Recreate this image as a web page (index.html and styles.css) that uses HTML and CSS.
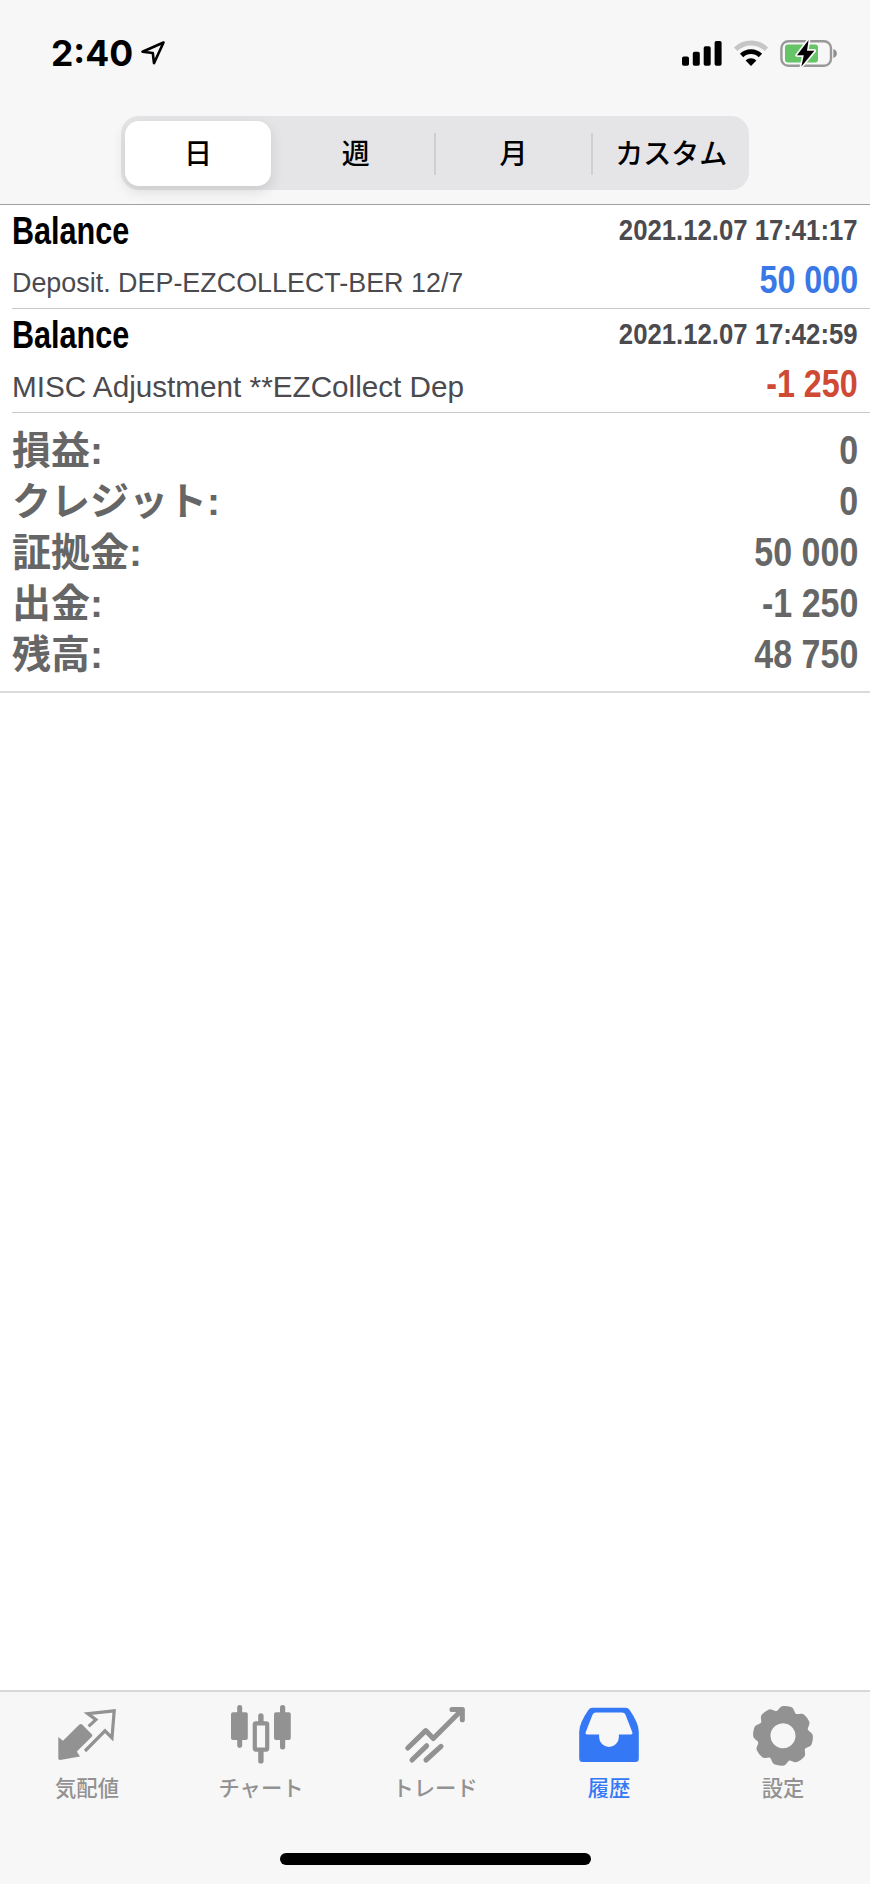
FILE: index.html
```html
<!DOCTYPE html>
<html lang="ja">
<head>
    <meta charset="UTF-8">
    <meta name="viewport" content="width=device-width, initial-scale=1.0">
    <title>履歴</title>
    <link rel="stylesheet" href="styles.css">
</head>
<body>
    <header class="header">
        <div class="status-bar">
            <span class="clock">2:40</span>
            <svg class="location" width="26" height="26" viewBox="0 0 26 26">
                <path d="M23.5 2.5 L2.5 11.8 L12.8 13 L14 23.2 Z" fill="none" stroke="#000" stroke-width="2.6" stroke-linejoin="round"/>
            </svg>
            <div class="status-icons">
                <svg width="40" height="26" viewBox="0 0 40 26">
                    <rect x="0" y="16.5" width="7" height="9.2" rx="1.8"/>
                    <rect x="10.8" y="11.8" width="7" height="13.9" rx="1.8"/>
                    <rect x="21.7" y="6.2" width="7" height="19.5" rx="1.8"/>
                    <rect x="32.6" y="1" width="7" height="24.7" rx="1.8"/>
                </svg>
                <svg width="36" height="26" viewBox="0 0 36 26">
                    <path d="M2.6 9.2 A22 22 0 0 1 33.4 9.2" fill="none" stroke="#c6c6c6" stroke-width="5"/>
                    <path d="M8.6 15.5 A13.4 13.4 0 0 1 27.4 15.5" fill="none" stroke="#000" stroke-width="4.8"/>
                    <path d="M18 26 L12.6 20.4 A7.6 7.6 0 0 1 23.4 20.4 Z"/>
                </svg>
                <svg width="58" height="30" viewBox="0 0 58 30">
                    <rect x="1.4" y="3.2" width="49.6" height="24.6" rx="7" fill="none" stroke="#999" stroke-width="2.4"/>
                    <path d="M53.4 11 Q56.8 12.4 56.8 15.4 Q56.8 18.5 53.4 20 Z" fill="#8c8c8c"/>
                    <rect x="5" y="6.6" width="33" height="17.8" rx="3" fill="#65c466"/>
                    <path d="M28.6 2 L17 17.2 L23.8 17.2 L21.4 28.4 L34.4 12.8 L27 12.8 Z" stroke="#f7f7f7" stroke-width="3.4" stroke-linejoin="round" paint-order="stroke"/>
                </svg>
            </div>
        </div>
        <div class="segments">
            <button class="segment active">日</button>
            <button class="segment">週</button>
            <button class="segment divided">月</button>
            <button class="segment divided">カスタム</button>
        </div>
    </header>

    <main class="content">
        <div class="deal">
            <div class="deal-row">
                <span class="deal-title">Balance</span>
                <span class="deal-time">2021.12.07 17:41:17</span>
            </div>
            <div class="deal-row">
                <span class="deal-comment small">Deposit. DEP-EZCOLLECT-BER 12/7</span>
                <span class="deal-amount profit">50 000</span>
            </div>
        </div>
        <div class="deal">
            <div class="deal-row">
                <span class="deal-title">Balance</span>
                <span class="deal-time">2021.12.07 17:42:59</span>
            </div>
            <div class="deal-row">
                <span class="deal-comment">MISC Adjustment **EZCollect Dep</span>
                <span class="deal-amount loss">-1 250</span>
            </div>
        </div>

        <div class="summary">
            <div class="summary-row"><span>損益:</span><span class="value">0</span></div>
            <div class="summary-row"><span>クレジット:</span><span class="value">0</span></div>
            <div class="summary-row"><span>証拠金:</span><span class="value">50 000</span></div>
            <div class="summary-row"><span>出金:</span><span class="value">-1 250</span></div>
            <div class="summary-row"><span>残高:</span><span class="value">48 750</span></div>
        </div>
    </main>

    <footer class="footer">
        <nav class="tabs">
            <a class="tab">
                <svg width="66" height="66" viewBox="0 0 66 66">
                    <path d="M4.3 34 L9 37.8 L25.4 21.6 Q27 20.4 28.4 21.8 L38 31.4 Q38.8 32.6 38 33.6 L22.8 48.6 L26 53.4 L6 57 Q4.4 57 4.3 55.6 Z" fill="currentColor"/>
                    <path d="M34.6 23.4 L41.9 16.7 L33.8 10.6 L60.2 7.8 L58 34.8 L51 27.8 L31 48" fill="none" stroke="currentColor" stroke-width="3.2"/>
                </svg>
                <span>気配値</span>
            </a>
            <a class="tab">
                <svg width="66" height="66" viewBox="0 0 66 66" fill="currentColor">
                    <rect x="9.2" y="2" width="5" height="43" rx="2.4"/>
                    <rect x="3" y="9.3" width="16.8" height="27.7" rx="2"/>
                    <rect x="30.2" y="10.3" width="5.4" height="50.3" rx="2.6"/>
                    <rect x="26.8" y="20.4" width="12.4" height="26.2" rx="1" fill="#f7f7f7" stroke="currentColor" stroke-width="4.2"/>
                    <rect x="52" y="2" width="5.2" height="44.4" rx="2.5"/>
                    <rect x="46" y="9.3" width="16.8" height="27.7" rx="2"/>
                </svg>
                <span>チャート</span>
            </a>
            <a class="tab">
                <svg width="66" height="66" viewBox="0 0 66 66" fill="none" stroke="currentColor" stroke-width="5.1" stroke-linecap="round" stroke-linejoin="round">
                    <path d="M5.8 45 L23.7 27.6 L31.3 35.5 L60 6.8"/>
                    <path d="M50 6.5 L60.3 6.5 L60.3 16.7"/>
                    <path d="M10 57 L24.6 42.8"/>
                    <path d="M24 57 L39 43.4"/>
                </svg>
                <span>トレード</span>
            </a>
            <a class="tab active">
                <svg width="66" height="66" viewBox="0 0 66 66">
                    <path fill="currentColor" fill-rule="evenodd" d="M16.5 4.8 H49.5 Q52.3 4.8 53.8 7.2 Q62.8 20 62.8 29 V55.5 Q62.8 59 59.3 59 H6.7 Q3.2 59 3.2 55.5 V29 Q3.2 20 12.2 7.2 Q13.7 4.8 16.5 4.8 Z
                        M20 9.4 H46 Q48.6 9.4 49.5 11.8 L56.4 29.6 Q57 31.6 55 31.6 H42.9 V34 A9.9 9.9 0 0 1 23.1 34 V31.6 H11 Q9 31.6 9.6 29.6 L16.5 11.8 Q17.4 9.4 20 9.4 Z"/>
                </svg>
                <span>履歴</span>
            </a>
            <a class="tab">
                <svg width="66" height="66" viewBox="0 0 66 66">
                    <defs>
                        <path id="tooth" d="M-11 -22 Q-8.6 -24.4 -7 -27.4 Q-6 -29.2 -4 -29.6 Q0 -30.4 4 -29.6 Q6 -29.2 7 -27.4 Q8.6 -24.4 11 -22 Z"/>
                    </defs>
                    <g transform="translate(33 32.8) rotate(8)" fill="currentColor">
                        <circle r="18.7" fill="none" stroke="currentColor" stroke-width="12.4"/>
                        <use href="#tooth"/>
                        <use href="#tooth" transform="rotate(45)"/>
                        <use href="#tooth" transform="rotate(90)"/>
                        <use href="#tooth" transform="rotate(135)"/>
                        <use href="#tooth" transform="rotate(180)"/>
                        <use href="#tooth" transform="rotate(225)"/>
                        <use href="#tooth" transform="rotate(270)"/>
                        <use href="#tooth" transform="rotate(315)"/>
                    </g>
                </svg>
                <span>設定</span>
            </a>
        </nav>
        <div class="home-indicator"></div>
    </footer>
</body>
</html>
```
FILE: styles.css
```css
* {
    box-sizing: border-box;
}

body {
    margin: 0;
    width: 870px;
    height: 1884px;
    display: flex;
    flex-direction: column;
    background-color: #fff;
    color: #000;
    font-family: "Liberation Sans", "Noto Sans CJK JP", sans-serif;
}

.header {
    height: 205px;
    background-color: #f7f7f7;
    border-bottom: 1px solid #a0a0a0;
}

.status-bar {
    height: 116px;
    padding: 0 32px 10px 51px;
    display: flex;
    align-items: center;
}

.clock {
    padding-top: 1px;
    font-family: Inter, sans-serif;
    font-weight: 700;
    font-size: 35.5px;
    line-height: 40px;
}

.location {
    margin-left: 7px;
}

.status-icons {
    margin-left: auto;
    display: flex;
    align-items: center;
}

.status-icons svg:nth-child(2) {
    margin: 0 11px;
}

/* day / week / month / custom switch */
.segments {
    width: 628px;
    height: 74px;
    margin: 0 auto;
    padding: 5px 0 4px 4px;
    display: flex;
    align-items: center;
    background-color: #e5e5e7;
    border-radius: 18px;
}

.segment {
    flex: 1;
    height: 42px;
    padding: 0 0 3px;
    border: none;
    background: none;
    color: #000;
    font-family: "Noto Sans CJK JP", sans-serif;
    font-weight: 500;
    font-size: 28px;
    line-height: 36px;
}

.segment.active {
    flex: none;
    width: 146px;
    height: 65px;
    margin-right: 7px;
    background-color: #fff;
    border-radius: 14px;
    box-shadow: 0 5px 14px rgba(0, 0, 0, 0.12);
}

.segment.divided {
    border-left: 2px solid #cfcfd2;
}

.content {
    flex: 1;
}

/* deals */
.deal {
    height: 104px;
    margin-left: 12px;
    padding-right: 12px;
    border-bottom: 1px solid #c8c8c8;
}

.deal-row {
    height: 50px;
    display: flex;
    justify-content: space-between;
    align-items: center;
    white-space: nowrap;
}

.deal-title {
    padding-top: 3px;
    font-weight: bold;
    font-size: 38px;
    transform: scaleX(0.805);
    transform-origin: left;
}

.deal-time {
    color: #4a4a4f;
    font-weight: bold;
    font-size: 30px;
    transform: scaleX(0.857);
    transform-origin: right;
}

.deal-comment {
    padding-top: 6px;
    color: #4a4a4f;
    font-size: 29.7px;
}

.deal-comment.small {
    font-size: 26.9px;
}

.deal-amount {
    padding-top: 1px;
    font-weight: bold;
    font-size: 38px;
    transform: scaleX(0.85);
    transform-origin: right;
}

.profit {
    color: #3a78e7;
}

.loss {
    color: #cf4a35;
}

/* totals */
.summary {
    height: 280px;
    padding: 12px 12px 0;
    border-bottom: 2px solid #dadada;
    color: #666;
    font-weight: bold;
    font-size: 39px;
}

.summary-row {
    height: 51px;
    display: flex;
    justify-content: space-between;
    align-items: center;
    line-height: 51px;
}

.value {
    font-size: 40px;
    transform: scaleX(0.85);
    transform-origin: right;
}

/* bottom bar */
.footer {
    height: 194px;
    background-color: #f7f7f7;
    border-top: 2px solid #d8d8d8;
}

.tabs {
    height: 161px;
    padding-top: 11px;
    display: flex;
}

.tab {
    flex: 1;
    display: flex;
    flex-direction: column;
    align-items: center;
    color: #929292;
    font-family: "Noto Sans CJK JP", sans-serif;
    font-weight: 500;
    font-size: 21.3px;
    line-height: 35px;
}

.tab.active {
    color: #3478f6;
}

.home-indicator {
    width: 311px;
    height: 12px;
    margin: 0 auto;
    border-radius: 6px;
    background-color: #000;
}
```
